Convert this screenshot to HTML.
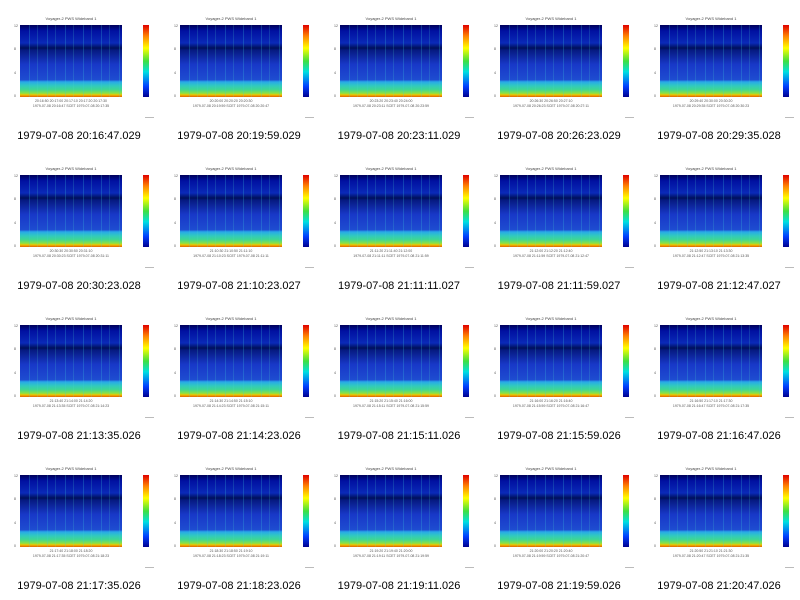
<!DOCTYPE html>
<html><head><meta charset="utf-8"><style>
body{margin:0;width:800px;height:596px;background:#fff;position:relative;overflow:hidden;font-family:"Liberation Sans",sans-serif}
.c{position:absolute;width:160px;height:150px}
.t{position:absolute;top:16px;left:20px;width:102px;text-align:center;font-size:4px;color:#444}
.p{position:absolute;left:20px;top:25px;width:102px;height:72px;background:
repeating-linear-gradient(90deg,rgba(0,0,0,0) 0 9px,rgba(60,200,220,.25) 9px 10px,rgba(0,0,0,0) 10px 17px,rgba(80,220,200,.18) 17px 18px),
linear-gradient(#00005a 0%,#0010a0 8%,#0a2ab8 25%,#00105a 32%,#061a80 35%,#1838c8 55%,#1e4cd0 76%,#28a8e8 79%,#30c8c0 84%,#40d890 90%,#90e040 95%,#f0c000 97%,#e06000 100%)}
.cb{position:absolute;left:143px;top:25px;width:6px;height:72px;background:linear-gradient(#e00000,#ff8000 15%,#ffff00 32%,#40e040 50%,#00e0e0 65%,#0040ff 85%,#000090)}
.ax{position:absolute;left:14px;top:24px;height:74px;font-size:3.5px;color:#555;display:flex;flex-direction:column;justify-content:space-between}
.xl{position:absolute;left:20px;top:99px;width:102px;font-size:3.5px;color:#555;text-align:center;line-height:5px}
.cap{position:absolute;top:130px;left:-1px;width:160px;text-align:center;font-size:11px;color:#000}
.ft{position:absolute;left:145px;top:117px;width:9px;height:1px;background:#bbb}
</style></head><body>
<div class="c" style="left:0;top:0"><div class="t">Voyager-2 PWS Wideband 1</div><div class="ax"><span>12</span><span>8</span><span>4</span><span>0</span></div><div class="p"></div><div class="cb"></div><div class="xl">20:16:50 20:17:00 20:17:10 20:17:20 20:17:30<br>1979-07-08 20:16:47 SCET 1979-07-08 20:17:35</div><div class="ft"></div><div class="cap">1979-07-08 20:16:47.029</div></div>
<div class="c" style="left:160px;top:0"><div class="t">Voyager-2 PWS Wideband 1</div><div class="ax"><span>12</span><span>8</span><span>4</span><span>0</span></div><div class="p"></div><div class="cb"></div><div class="xl">20:20:00 20:20:20 20:20:30<br>1979-07-08 20:19:59 SCET 1979-07-08 20:20:47</div><div class="ft"></div><div class="cap">1979-07-08 20:19:59.029</div></div>
<div class="c" style="left:320px;top:0"><div class="t">Voyager-2 PWS Wideband 1</div><div class="ax"><span>12</span><span>8</span><span>4</span><span>0</span></div><div class="p"></div><div class="cb"></div><div class="xl">20:23:20 20:23:40 20:24:00<br>1979-07-08 20:23:11 SCET 1979-07-08 20:23:59</div><div class="ft"></div><div class="cap">1979-07-08 20:23:11.029</div></div>
<div class="c" style="left:480px;top:0"><div class="t">Voyager-2 PWS Wideband 1</div><div class="ax"><span>12</span><span>8</span><span>4</span><span>0</span></div><div class="p"></div><div class="cb"></div><div class="xl">20:26:30 20:26:50 20:27:10<br>1979-07-08 20:26:23 SCET 1979-07-08 20:27:11</div><div class="ft"></div><div class="cap">1979-07-08 20:26:23.029</div></div>
<div class="c" style="left:640px;top:0"><div class="t">Voyager-2 PWS Wideband 1</div><div class="ax"><span>12</span><span>8</span><span>4</span><span>0</span></div><div class="p"></div><div class="cb"></div><div class="xl">20:29:40 20:30:00 20:30:20<br>1979-07-08 20:29:35 SCET 1979-07-08 20:30:23</div><div class="ft"></div><div class="cap">1979-07-08 20:29:35.028</div></div>

<div class="c" style="left:0;top:150px"><div class="t">Voyager-2 PWS Wideband 1</div><div class="ax"><span>12</span><span>8</span><span>4</span><span>0</span></div><div class="p"></div><div class="cb"></div><div class="xl">20:30:30 20:30:50 20:31:10<br>1979-07-08 20:30:23 SCET 1979-07-08 20:31:11</div><div class="ft"></div><div class="cap">1979-07-08 20:30:23.028</div></div>
<div class="c" style="left:160px;top:150px"><div class="t">Voyager-2 PWS Wideband 1</div><div class="ax"><span>12</span><span>8</span><span>4</span><span>0</span></div><div class="p"></div><div class="cb"></div><div class="xl">21:10:30 21:10:50 21:11:10<br>1979-07-08 21:10:23 SCET 1979-07-08 21:11:11</div><div class="ft"></div><div class="cap">1979-07-08 21:10:23.027</div></div>
<div class="c" style="left:320px;top:150px"><div class="t">Voyager-2 PWS Wideband 1</div><div class="ax"><span>12</span><span>8</span><span>4</span><span>0</span></div><div class="p"></div><div class="cb"></div><div class="xl">21:11:20 21:11:40 21:12:00<br>1979-07-08 21:11:11 SCET 1979-07-08 21:11:59</div><div class="ft"></div><div class="cap">1979-07-08 21:11:11.027</div></div>
<div class="c" style="left:480px;top:150px"><div class="t">Voyager-2 PWS Wideband 1</div><div class="ax"><span>12</span><span>8</span><span>4</span><span>0</span></div><div class="p"></div><div class="cb"></div><div class="xl">21:12:00 21:12:20 21:12:40<br>1979-07-08 21:11:59 SCET 1979-07-08 21:12:47</div><div class="ft"></div><div class="cap">1979-07-08 21:11:59.027</div></div>
<div class="c" style="left:640px;top:150px"><div class="t">Voyager-2 PWS Wideband 1</div><div class="ax"><span>12</span><span>8</span><span>4</span><span>0</span></div><div class="p"></div><div class="cb"></div><div class="xl">21:12:50 21:13:10 21:13:30<br>1979-07-08 21:12:47 SCET 1979-07-08 21:13:35</div><div class="ft"></div><div class="cap">1979-07-08 21:12:47.027</div></div>

<div class="c" style="left:0;top:300px"><div class="t">Voyager-2 PWS Wideband 1</div><div class="ax"><span>12</span><span>8</span><span>4</span><span>0</span></div><div class="p"></div><div class="cb"></div><div class="xl">21:13:40 21:14:00 21:14:20<br>1979-07-08 21:13:35 SCET 1979-07-08 21:14:23</div><div class="ft"></div><div class="cap">1979-07-08 21:13:35.026</div></div>
<div class="c" style="left:160px;top:300px"><div class="t">Voyager-2 PWS Wideband 1</div><div class="ax"><span>12</span><span>8</span><span>4</span><span>0</span></div><div class="p"></div><div class="cb"></div><div class="xl">21:14:30 21:14:50 21:15:10<br>1979-07-08 21:14:23 SCET 1979-07-08 21:15:11</div><div class="ft"></div><div class="cap">1979-07-08 21:14:23.026</div></div>
<div class="c" style="left:320px;top:300px"><div class="t">Voyager-2 PWS Wideband 1</div><div class="ax"><span>12</span><span>8</span><span>4</span><span>0</span></div><div class="p"></div><div class="cb"></div><div class="xl">21:15:20 21:15:40 21:16:00<br>1979-07-08 21:15:11 SCET 1979-07-08 21:15:59</div><div class="ft"></div><div class="cap">1979-07-08 21:15:11.026</div></div>
<div class="c" style="left:480px;top:300px"><div class="t">Voyager-2 PWS Wideband 1</div><div class="ax"><span>12</span><span>8</span><span>4</span><span>0</span></div><div class="p"></div><div class="cb"></div><div class="xl">21:16:00 21:16:20 21:16:40<br>1979-07-08 21:15:59 SCET 1979-07-08 21:16:47</div><div class="ft"></div><div class="cap">1979-07-08 21:15:59.026</div></div>
<div class="c" style="left:640px;top:300px"><div class="t">Voyager-2 PWS Wideband 1</div><div class="ax"><span>12</span><span>8</span><span>4</span><span>0</span></div><div class="p"></div><div class="cb"></div><div class="xl">21:16:50 21:17:10 21:17:30<br>1979-07-08 21:16:47 SCET 1979-07-08 21:17:35</div><div class="ft"></div><div class="cap">1979-07-08 21:16:47.026</div></div>

<div class="c" style="left:0;top:450px"><div class="t">Voyager-2 PWS Wideband 1</div><div class="ax"><span>12</span><span>8</span><span>4</span><span>0</span></div><div class="p"></div><div class="cb"></div><div class="xl">21:17:40 21:18:00 21:18:20<br>1979-07-08 21:17:35 SCET 1979-07-08 21:18:23</div><div class="ft"></div><div class="cap">1979-07-08 21:17:35.026</div></div>
<div class="c" style="left:160px;top:450px"><div class="t">Voyager-2 PWS Wideband 1</div><div class="ax"><span>12</span><span>8</span><span>4</span><span>0</span></div><div class="p"></div><div class="cb"></div><div class="xl">21:18:30 21:18:50 21:19:10<br>1979-07-08 21:18:23 SCET 1979-07-08 21:19:11</div><div class="ft"></div><div class="cap">1979-07-08 21:18:23.026</div></div>
<div class="c" style="left:320px;top:450px"><div class="t">Voyager-2 PWS Wideband 1</div><div class="ax"><span>12</span><span>8</span><span>4</span><span>0</span></div><div class="p"></div><div class="cb"></div><div class="xl">21:19:20 21:19:40 21:20:00<br>1979-07-08 21:19:11 SCET 1979-07-08 21:19:59</div><div class="ft"></div><div class="cap">1979-07-08 21:19:11.026</div></div>
<div class="c" style="left:480px;top:450px"><div class="t">Voyager-2 PWS Wideband 1</div><div class="ax"><span>12</span><span>8</span><span>4</span><span>0</span></div><div class="p"></div><div class="cb"></div><div class="xl">21:20:00 21:20:20 21:20:40<br>1979-07-08 21:19:59 SCET 1979-07-08 21:20:47</div><div class="ft"></div><div class="cap">1979-07-08 21:19:59.026</div></div>
<div class="c" style="left:640px;top:450px"><div class="t">Voyager-2 PWS Wideband 1</div><div class="ax"><span>12</span><span>8</span><span>4</span><span>0</span></div><div class="p"></div><div class="cb"></div><div class="xl">21:20:50 21:21:10 21:21:30<br>1979-07-08 21:20:47 SCET 1979-07-08 21:21:35</div><div class="ft"></div><div class="cap">1979-07-08 21:20:47.026</div></div>
</body></html>
